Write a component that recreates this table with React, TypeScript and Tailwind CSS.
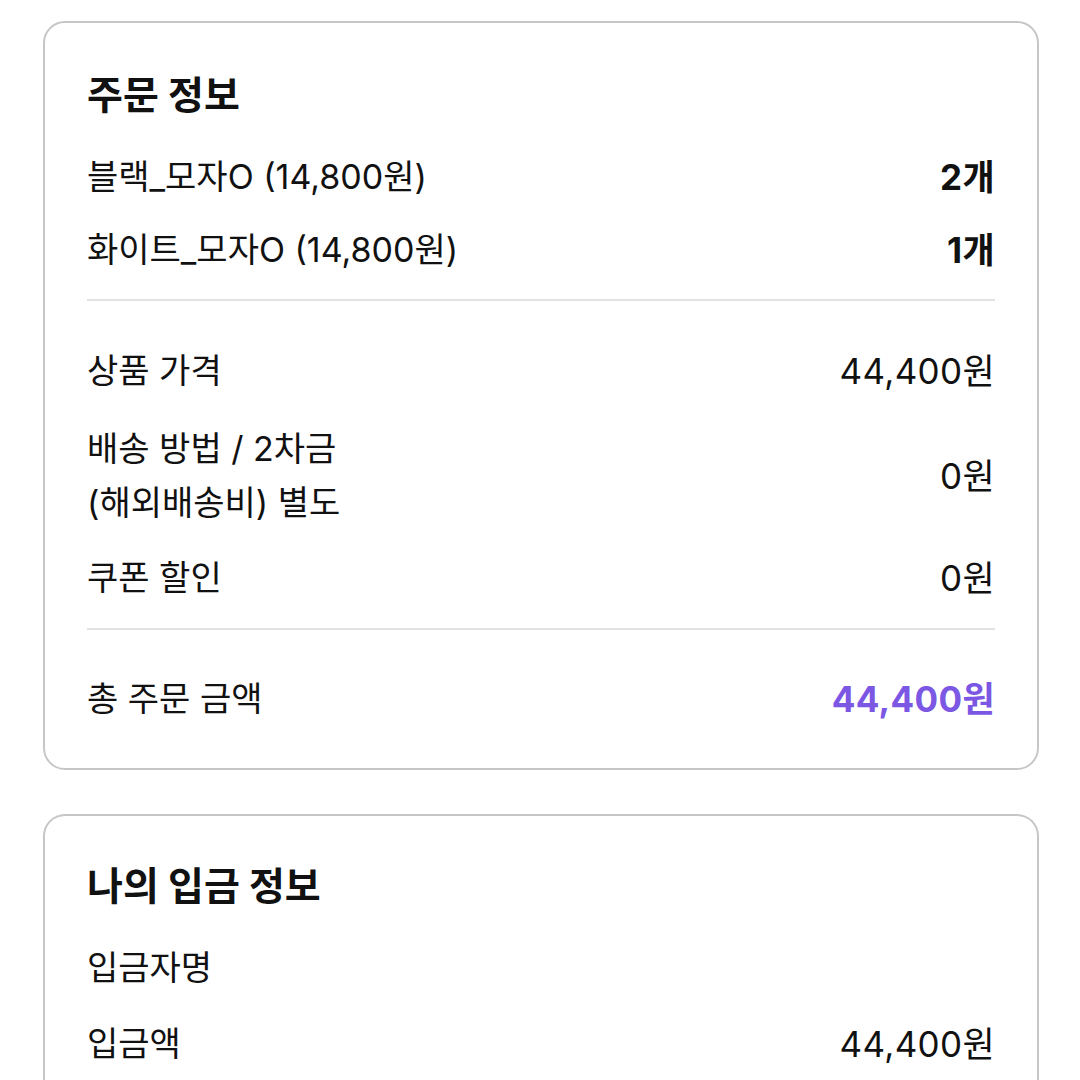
import React from 'react';

const FONT = "font-['Inter','Noto_Sans_CJK_KR',sans-serif]";

interface RowProps {
  label: React.ReactNode;
  value: string;
  bold?: boolean;
  className?: string;
  valueClass?: string;
}

const Row: React.FC<RowProps> = ({ label, value, bold, className = '', valueClass = 'text-[#111]' }) => (
  <div className={`flex items-center justify-between leading-[54px] ${className}`}>
    <div className="text-[#111]">{label}</div>
    <div className={`text-[35px] tracking-[0.01em] ${bold ? 'font-bold' : ''} ${valueClass}`}>{value}</div>
  </div>
);

const Divider: React.FC<{ className?: string }> = ({ className = '' }) => (
  <div className={`h-[2px] bg-[#e2e2e2] ${className}`} />
);

const App: React.FC = () => {
  return (
    <div className={`min-h-screen bg-white pl-[43px] pr-[41px] pt-[21px] ${FONT} text-[34px] text-[#111]`}>
      <section className="rounded-[22px] border-2 border-[#c6c6c6] px-[42px] pt-[48px] pb-[42px]">
        <h2 className="text-[39px] font-bold leading-[48px]">주문 정보</h2>
        <Row className="mt-[31px]" label="블랙_모자O (14,800원)" value="2개" bold />
        <Row className="mt-[19px]" label="화이트_모자O (14,800원)" value="1개" bold />
        <Divider className="mt-[22px]" />
        <Row className="mt-[43px]" label="상품 가격" value="44,400원" />
        <Row
          className="mt-[24px]"
          label={
            <>
              배송 방법 / 2차금
              <br />
              (해외배송비) 별도
            </>
          }
          value="0원"
        />
        <Row className="mt-[21px]" label="쿠폰 할인" value="0원" />
        <Divider className="mt-[23px]" />
        <Row className="mt-[42px]" label="총 주문 금액" value="44,400원" bold valueClass="text-[#7b57e4]" />
      </section>

      <section className="mt-[44px] rounded-t-[22px] border-2 border-b-0 border-[#c6c6c6] px-[42px] pt-[46px] pb-[40px]">
        <h2 className="text-[39px] font-bold leading-[48px]">나의 입금 정보</h2>
        <Row className="mt-[31px]" label="입금자명" value="" />
        <Row className="mt-[22px]" label="입금액" value="44,400원" />
      </section>
    </div>
  );
};

export default App;
